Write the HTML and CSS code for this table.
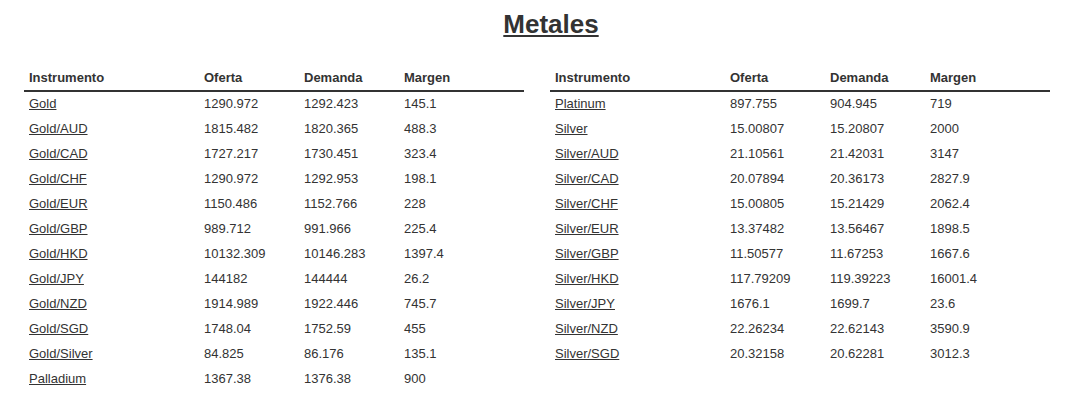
FILE: index.html
```html
<!DOCTYPE html>
<html>
<head>
<meta charset="utf-8">
<link rel="stylesheet" href="styles.css">
</head>
<body>
<h1 class="title">Metales</h1>
<div class="tables">
  <table class="quotes">
    <thead><tr><th class="c1">Instrumento</th><th class="c2">Oferta</th><th class="c3">Demanda</th><th class="c4">Margen</th></tr></thead>
    <tbody>
      <tr><td><a href="#">Gold</a></td><td>1290.972</td><td>1292.423</td><td>145.1</td></tr>
      <tr><td><a href="#">Gold/AUD</a></td><td>1815.482</td><td>1820.365</td><td>488.3</td></tr>
      <tr><td><a href="#">Gold/CAD</a></td><td>1727.217</td><td>1730.451</td><td>323.4</td></tr>
      <tr><td><a href="#">Gold/CHF</a></td><td>1290.972</td><td>1292.953</td><td>198.1</td></tr>
      <tr><td><a href="#">Gold/EUR</a></td><td>1150.486</td><td>1152.766</td><td>228</td></tr>
      <tr><td><a href="#">Gold/GBP</a></td><td>989.712</td><td>991.966</td><td>225.4</td></tr>
      <tr><td><a href="#">Gold/HKD</a></td><td>10132.309</td><td>10146.283</td><td>1397.4</td></tr>
      <tr><td><a href="#">Gold/JPY</a></td><td>144182</td><td>144444</td><td>26.2</td></tr>
      <tr><td><a href="#">Gold/NZD</a></td><td>1914.989</td><td>1922.446</td><td>745.7</td></tr>
      <tr><td><a href="#">Gold/SGD</a></td><td>1748.04</td><td>1752.59</td><td>455</td></tr>
      <tr><td><a href="#">Gold/Silver</a></td><td>84.825</td><td>86.176</td><td>135.1</td></tr>
      <tr><td><a href="#">Palladium</a></td><td>1367.38</td><td>1376.38</td><td>900</td></tr>
    </tbody>
  </table>
  <table class="quotes">
    <thead><tr><th class="c1">Instrumento</th><th class="c2">Oferta</th><th class="c3">Demanda</th><th class="c4">Margen</th></tr></thead>
    <tbody>
      <tr><td><a href="#">Platinum</a></td><td>897.755</td><td>904.945</td><td>719</td></tr>
      <tr><td><a href="#">Silver</a></td><td>15.00807</td><td>15.20807</td><td>2000</td></tr>
      <tr><td><a href="#">Silver/AUD</a></td><td>21.10561</td><td>21.42031</td><td>3147</td></tr>
      <tr><td><a href="#">Silver/CAD</a></td><td>20.07894</td><td>20.36173</td><td>2827.9</td></tr>
      <tr><td><a href="#">Silver/CHF</a></td><td>15.00805</td><td>15.21429</td><td>2062.4</td></tr>
      <tr><td><a href="#">Silver/EUR</a></td><td>13.37482</td><td>13.56467</td><td>1898.5</td></tr>
      <tr><td><a href="#">Silver/GBP</a></td><td>11.50577</td><td>11.67253</td><td>1667.6</td></tr>
      <tr><td><a href="#">Silver/HKD</a></td><td>117.79209</td><td>119.39223</td><td>16001.4</td></tr>
      <tr><td><a href="#">Silver/JPY</a></td><td>1676.1</td><td>1699.7</td><td>23.6</td></tr>
      <tr><td><a href="#">Silver/NZD</a></td><td>22.26234</td><td>22.62143</td><td>3590.9</td></tr>
      <tr><td><a href="#">Silver/SGD</a></td><td>20.32158</td><td>20.62281</td><td>3012.3</td></tr>
    </tbody>
  </table>
</div>
</body>
</html>
```

FILE: styles.css
```css
html, body {
  margin: 0;
  padding: 0;
  background: #fff;
}
body {
  font-family: "Liberation Sans", Arial, sans-serif;
  font-size: 13px;
  color: #333;
}
.title {
  margin: 0;
  padding-top: 9px;
  padding-left: 34px;
  text-align: center;
  font-size: 26px;
  font-weight: bold;
  line-height: 30px;
  text-decoration: underline;
  color: #333;
}
.tables {
  display: flex;
  align-items: flex-start;
  gap: 26px;
  padding: 24px 0 0 24px;
}
.quotes {
  width: 500px;
  border-collapse: collapse;
  table-layout: fixed;
}
.quotes th {
  text-align: left;
  font-weight: bold;
  padding: 1px 5px 0;
  height: 26px;
  border-bottom: 2px solid #333;
  vertical-align: middle;
}
.quotes td {
  padding: 0 5px 2px;
  height: 23px;
  vertical-align: middle;
}
.c1 { width: 165px; }
.c2 { width: 90px; }
.c3 { width: 90px; }
.c4 { width: 115px; }
.quotes a {
  color: #333;
  text-decoration: underline;
}
```
